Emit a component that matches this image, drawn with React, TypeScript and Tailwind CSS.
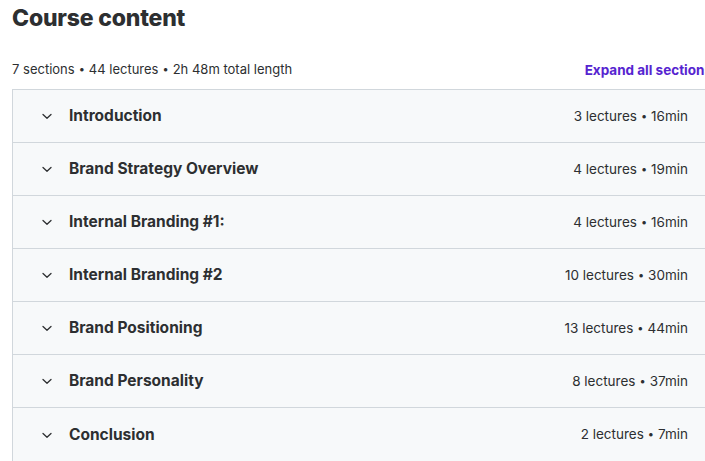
import React from 'react'

const sections = [
  { title: 'Introduction', lectures: 3, length: '16min' },
  { title: 'Brand Strategy Overview', lectures: 4, length: '19min' },
  { title: 'Internal Branding #1:', lectures: 4, length: '16min' },
  { title: 'Internal Branding #2', lectures: 10, length: '30min' },
  { title: 'Brand Positioning', lectures: 13, length: '44min' },
  { title: 'Brand Personality', lectures: 8, length: '37min' },
  { title: 'Conclusion', lectures: 2, length: '7min' },
]

function Dot() {
  return <span className="mx-[4px] text-[11px] align-[1px]">•</span>
}

function Chevron() {
  return (
    <svg width="14" height="14" viewBox="0 0 14 14" className="shrink-0 text-[#2d2f31]">
      <path d="M3 5.5 7 9.2l4-3.7" fill="none" stroke="currentColor" strokeWidth="1.3" strokeLinecap="round" strokeLinejoin="round" />
    </svg>
  )
}

export default function App() {
  return (
    <div className="w-[705px] h-[461px] overflow-hidden bg-white font-['Inter',sans-serif] text-[#2d2f31]">
      <div className="w-[712px] pl-3">
        <h2 className="pt-[2px] text-[23px] leading-[32px] font-extrabold tracking-[-0.2px]">Course content</h2>
        <div className="mt-[25px] flex items-center justify-between h-[22px]">
          <span className="text-[13px] text-[#2d2f31]">
            7 sections<Dot />44 lectures<Dot />2h 48m total length
          </span>
          <button className="text-[13.5px] font-bold text-[#5624d0] whitespace-nowrap">Expand all sections</button>
        </div>
        <div className="mt-[8px] border border-[#d1d7dc] border-r-0">
          {sections.map((s, i) => (
            <div
              key={s.title}
              className={`flex items-center justify-between h-[53px] bg-[#f7f9fa] pl-[27px] pr-6 ${i < sections.length - 1 ? 'border-b border-[#d1d7dc]' : ''}`}
            >
              <div className="flex items-center gap-[15px]">
                <Chevron />
                <span className="text-[15.5px] font-bold">{s.title}</span>
              </div>
              <span className="text-[13.5px]">
                {s.lectures} lectures<Dot />{s.length}
              </span>
            </div>
          ))}
        </div>
      </div>
    </div>
  )
}
